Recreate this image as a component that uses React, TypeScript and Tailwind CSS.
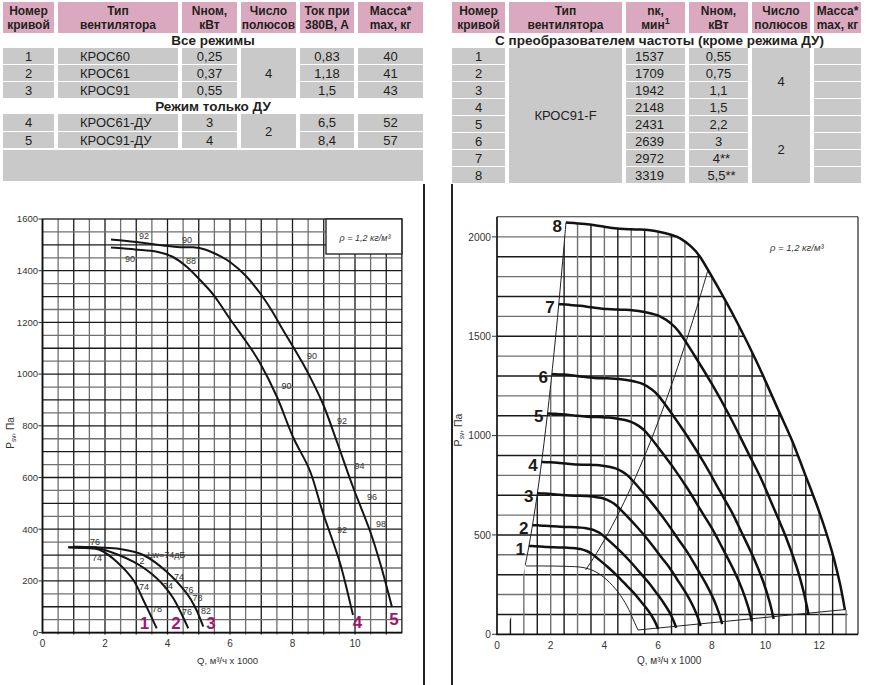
import React from "react";

type P = [number, number];
const f = (n: number) => n.toFixed(2);

function segs(pts: P[]): string {
  let d = "";
  for (let i = 0; i < pts.length - 1; i++) {
    const p0 = pts[i - 1] || pts[i];
    const p1 = pts[i];
    const p2 = pts[i + 1];
    const p3 = pts[i + 2] || p2;
    const c1x = p1[0] + (p2[0] - p0[0]) / 6;
    const c1y = p1[1] + (p2[1] - p0[1]) / 6;
    const c2x = p2[0] - (p3[0] - p1[0]) / 6;
    const c2y = p2[1] - (p3[1] - p1[1]) / 6;
    d += ` C${f(c1x)},${f(c1y)} ${f(c2x)},${f(c2y)} ${f(p2[0])},${f(p2[1])}`;
  }
  return d;
}
const smooth = (pts: P[]) => `M${f(pts[0][0])},${f(pts[0][1])}` + segs(pts);

const SANS = "'Liberation Sans', Arial, sans-serif";
const NARROW = "'Liberation Sans Narrow', 'Liberation Sans', Arial, sans-serif";
const PURPLE = "#9e1a6d";
const DARK = "#1a1a1a";
const GRAY = "#707070";

function LeftChart() {
  const X = (q: number) => 42.5 + q * 31.25;
  const Y = (p: number) => 632.6 - p * 0.2585;
  const right = X(11.5);
  const top = Y(1600);
  const c5: P[] = [
    [111, 239.5], [140, 242.5], [163, 245.5], [180, 247.3], [193, 247.3], [205, 249.5], [218, 255], [230, 262],
    [245, 275], [260, 293], [272, 311], [283, 330], [295, 350], [307, 371], [323, 404], [337, 442],
    [353, 487], [370, 531], [381, 566], [392, 607],
  ];
  const c4: P[] = [
    [111, 247.5], [135, 249.5], [157, 251.8], [173, 257], [187, 267], [200, 280], [212, 293], [220, 304],
    [230, 319], [245, 340], [260, 363], [277, 397], [293, 437], [310, 471], [323, 513], [340, 563], [353, 615],
  ];
  const c1: P[] = [[68.3, 547.3], [85, 548], [100, 550], [116.7, 561.7], [133.3, 580], [143.3, 600], [150, 614], [156.7, 628.3]];
  const c2: P[] = [[68.3, 547.3], [85, 547.6], [100, 548.5], [133.3, 561.7], [156.7, 578.3], [173.3, 598.3], [188.3, 628.3]];
  const c3: P[] = [[73.3, 546.7], [100, 547.5], [120, 549], [143.3, 555], [166.7, 571.7], [186.7, 593.3], [196, 609], [203.3, 626.7]];
  const small: [string, number, number][] = [
    ["92", 144, 239], ["90", 187, 242.5], ["90", 130, 262], ["88", 191, 264],
    ["90", 312, 358.5], ["90", 286.5, 388.5], ["92", 342, 423.5], ["94", 359.5, 468.5],
    ["96", 372, 500], ["98", 381, 526.5], ["92", 342, 532.5],
    ["76", 95, 545], ["74", 97, 561], ["74", 179, 580], ["74", 144, 590], ["74", 168, 588.5],
    ["76", 188.5, 592.5], ["78", 197.5, 601], ["78", 157, 611.5], ["76", 187, 615], ["82", 206, 613.5],
  ];
  return (
    <svg width={423} height={501} viewBox="0 184 423 501" className="block shrink-0">
      <rect x={42.5} y={top} width={right - 42.5} height={632.6 - top} fill="#fff" />
      {Array.from({ length: 22 }, (_, i) => i + 1).map((k) => {
        const x = 42.5 + k * 15.625;
        return <line key={"v" + k} x1={x} x2={x} y1={top} y2={634.5} stroke={k % 2 === 0 ? DARK : GRAY} strokeWidth={1.3} />;
      })}
      {Array.from({ length: 31 }, (_, i) => i + 1).map((k) => {
        const y = 632.6 - k * 12.925;
        return <line key={"h" + k} x1={42.5} x2={right} y1={y} y2={y} stroke={k % 2 === 0 ? DARK : GRAY} strokeWidth={1.3} />;
      })}
      <rect x={42.5} y={top} width={right - 42.5} height={632.6 - top} fill="none" stroke={DARK} strokeWidth={1.3} />
      <line x1={42.5} x2={42.5} y1={top} y2={633.5} stroke="#111" strokeWidth={1.7} />
      <line x1={42} x2={right} y1={632.6} y2={632.6} stroke="#111" strokeWidth={1.7} />
      {[0, 200, 400, 600, 800, 1000, 1200, 1400, 1600].map((p) => (
        <g key={"yl" + p}>
          <line x1={38.5} x2={42.5} y1={Y(p)} y2={Y(p)} stroke="#333" strokeWidth={1} />
          <text x={38} y={Y(p) + 3.3} fontSize={9.5} textAnchor="end" fill="#333" fontFamily={SANS}>{p}</text>
        </g>
      ))}
      {[0, 2, 4, 6, 8, 10].map((q) => (
        <text key={"xl" + q} x={X(q)} y={647} fontSize={10} textAnchor="middle" fill="#333" fontFamily={SANS}>{q}</text>
      ))}
      <text x={197} y={664} fontSize={9.5} fill="#333" fontFamily={SANS}>Q, м³/ч x 1000</text>
      <text transform="translate(13.5,433) rotate(-90)" fontSize={10} textAnchor="middle" fill="#333" fontFamily={SANS}>
        P<tspan fontSize={6.5} dy={2}>sv</tspan><tspan dy={-2}>, Па</tspan>
      </text>
      <rect x={326} y={top} width={right - 326} height={35} fill="#fff" stroke={DARK} strokeWidth={1.3} />
      <text x={365} y={241} fontSize={9} textAnchor="middle" fill="#333" fontStyle="italic" fontFamily={SANS}>ρ = 1,2 кг/м³</text>
      {[c5, c4].map((c, i) => (
        <path key={"big" + i} d={smooth(c)} fill="none" stroke="#151515" strokeWidth={2} />
      ))}
      {[c1, c2, c3].map((c, i) => (
        <path key={"sm" + i} d={smooth(c)} fill="none" stroke="#151515" strokeWidth={2} />
      ))}
      {small.map(([t, x, y], i) => (
        <text key={"s" + i} x={x} y={y} fontSize={9} textAnchor="middle" fill="#333" fontFamily={NARROW}>{t}</text>
      ))}
      <text x={147.5} y={558} fontSize={9} fill="#333" fontFamily={NARROW}>Lw=74дБ</text>
      <text x={142} y={564} fontSize={9} textAnchor="middle" fill="#333" fontFamily={NARROW}>2</text>
      {([["1", 144.5, 629.3], ["2", 176, 629.3], ["3", 211, 629.3], ["4", 357.5, 628.3], ["5", 394, 625]] as [string, number, number][]).map(([t, x, y]) => (
        <text key={"p" + t} x={x} y={y} fontSize={17} fontWeight="bold" textAnchor="middle" fill={PURPLE} fontFamily={NARROW}>{t}</text>
      ))}
    </svg>
  );
}

function RightChart() {
  const X = (q: number) => 497 + q * 26.85;
  const Y = (p: number) => 634.3 - p * 0.1987;
  const base8: P[] = [
    [2.57, 2072], [3.0, 2068], [3.46, 2062], [4.0, 2051], [4.58, 2041], [5.0, 2038], [5.33, 2037], [5.7, 2033], [6.07, 2025],
    [6.45, 2012], [6.82, 1993], [7.2, 1955], [7.56, 1900], [8.18, 1758], [8.93, 1573], [9.67, 1372], [10.45, 1137],
    [10.98, 978], [11.46, 810], [12.02, 609], [12.46, 424], [12.77, 257], [12.96, 122],
  ];
  const speeds = [1537, 1709, 1942, 2148, 2431, 2639, 2972, 3319];
  const curve = (r: number): P[] => base8.map(([q, p]) => [X(q * r), Y(p * r * r)]);
  const c8 = curve(1);
  const para = (k: number, q0: number, q1: number, n: number): P[] =>
    Array.from({ length: n + 1 }, (_, i) => {
      const q = q0 + ((q1 - q0) * i) / n;
      return [X(q), Y(k * q * q)];
    });
  const leftPara = para(314, 1.05, 2.57, 12);
  const clipPara = para(314, 0, 2.57, 20);
  const rightPara = para(29.7, 3.3, 7.86, 16);
  const c0: P[] = [[526, 566], [545, 566], [565, 566.3], [583, 567.5], [596, 572], [607, 580], [618, 592], [627, 606], [633, 619], [638, 630]];
  const vClip =
    `M497,634.3 L` + clipPara.map((p) => `${f(p[0])},${f(p[1])}`).join(" L") + segs(c8) + " L847.5,610 L847.5,634.3 Z";
  const hClip = `M494,636 L494,218 L${f(c8[0][0])},${f(c8[0][1])}` + segs(c8) + " L847.5,610 L847.5,636 Z";
  const right = 858;
  const top = 216.7;
  return (
    <svg width={421} height={501} viewBox="453 184 421 501" className="block shrink-0">
      <defs>
        <clipPath id="vclip"><path d={vClip} /></clipPath>
        <clipPath id="hclip"><path d={hClip} /></clipPath>
      </defs>
      <g clipPath="url(#hclip)">
        {Array.from({ length: 20 }, (_, i) => (i + 1) * 100).map((p) => (
          <line key={"h" + p} x1={497} x2={860} y1={Y(p)} y2={Y(p)} stroke={(p / 100) % 2 === 1 ? DARK : GRAY} strokeWidth={1.4} />
        ))}
      </g>
      <g clipPath="url(#vclip)">
        {Array.from({ length: 26 }, (_, i) => i + 1).map((k) => (
          <line key={"v" + k} x1={X(k * 0.5)} x2={X(k * 0.5)} y1={210} y2={634.3} stroke={k % 2 === 1 ? DARK : GRAY} strokeWidth={1.4} />
        ))}
      </g>
      <line x1={497} x2={right} y1={top} y2={top} stroke="#333" strokeWidth={1.1} />
      <line x1={right} x2={right} y1={top} y2={634.3} stroke="#333" strokeWidth={1.3} />
      <line x1={497} x2={497} y1={top} y2={635} stroke="#111" strokeWidth={1.7} />
      <line x1={496} x2={right} y1={634.3} y2={634.3} stroke="#111" strokeWidth={1.7} />
      {[0, 500, 1000, 1500, 2000].map((p) => (
        <g key={"yl" + p}>
          <line x1={492} x2={497} y1={Y(p)} y2={Y(p)} stroke="#333" strokeWidth={1} />
          <text x={491} y={Y(p) + 3.6} fontSize={10.2} textAnchor="end" fill="#333" fontFamily={SANS}>{p}</text>
        </g>
      ))}
      {[0, 2, 4, 6, 8, 10, 12].map((q) => (
        <text key={"xl" + q} x={X(q)} y={649} fontSize={10.2} textAnchor="middle" fill="#333" fontFamily={SANS}>{q}</text>
      ))}
      <text x={637} y={664} fontSize={10} fill="#333" fontFamily={SANS}>Q, м³/ч x 1000</text>
      <text transform="translate(462,430) rotate(-90)" fontSize={10.5} textAnchor="middle" fill="#333" fontFamily={SANS}>
        P<tspan fontSize={6.5} dy={2}>sv</tspan><tspan dy={-2}>, Па</tspan>
      </text>
      <text x={770} y={251} fontSize={9.5} fill="#333" fontStyle="italic" fontFamily={SANS}>ρ = 1,2 кг/м³</text>
      <path d={smooth(leftPara)} fill="none" stroke="#222" strokeWidth={1} />
      <path d={smooth(rightPara)} fill="none" stroke="#222" strokeWidth={1} />
      <path d={smooth(c0)} fill="none" stroke="#222" strokeWidth={1} />
      <line x1={638} y1={630} x2={845.5} y2={609.5} stroke="#222" strokeWidth={1} />
      {speeds.map((n, i) => {
        const r = n / 3319;
        const pts = curve(r);
        return (
          <g key={"c" + n}>
            <path d={smooth(pts)} fill="none" stroke="#121212" strokeWidth={2.5} />
            <text x={pts[0][0] - 4} y={pts[0][1] + 9} fontSize={17} fontWeight="bold" textAnchor="end" fill="#1a1a1a" fontFamily={NARROW}>
              {i + 1}
            </text>
          </g>
        );
      })}
    </svg>
  );
}

const HDR = "bg-[#dba9bf] flex flex-col items-center justify-center text-center font-bold text-[12px] leading-[14px] font-['Liberation_Sans_Narrow','Liberation_Sans',Arial,sans-serif]";
const CELL = "bg-[#c9c9c9] flex items-center justify-center text-[13px] leading-none";
const TITLE = "col-span-6 flex items-center justify-center font-bold text-[13.5px] leading-none";

function LeftTable() {
  const rows1 = [
    ["1", "КРОС60", "0,25", "0,83", "40"],
    ["2", "КРОС61", "0,37", "1,18", "41"],
    ["3", "КРОС91", "0,55", "1,5", "43"],
  ];
  const rows2 = [
    ["4", "КРОС61-ДУ", "3", "6,5", "52"],
    ["5", "КРОС91-ДУ", "4", "8,4", "57"],
  ];
  const renderRow = (r: string[], i: number, span: React.ReactNode) => (
    <React.Fragment key={r[0]}>
      <div className={CELL}>{r[0]}</div>
      <div className={CELL + " !justify-start pl-[22px]"}>{r[1]}</div>
      <div className={CELL}>{r[2]}</div>
      {i === 0 ? span : null}
      <div className={CELL}>{r[3]}</div>
      <div className={CELL}>{r[4]}</div>
    </React.Fragment>
  );
  return (
    <div className="grid w-[420px] grid-cols-[51px_120px_55px_55px_54px_65px] grid-rows-[31px_13px_16px_16px_16px_14px_17px_16px_32px] gap-x-[4px] gap-y-[1px]">
      <div className={HDR}>Номер<br />кривой</div>
      <div className={HDR}>Тип<br />вентилятора</div>
      <div className={HDR}>Nном,<br />кВт</div>
      <div className={HDR}>Число<br />полюсов</div>
      <div className={HDR}>Ток при<br />380В, А</div>
      <div className={HDR}>Масса*<br />max, кг</div>
      <div className={TITLE}>Все режимы</div>
      {rows1.map((r, i) => renderRow(r, i, <div className={CELL + " row-span-3"}>4</div>))}
      <div className={TITLE + " pt-[2px]"}>Режим только ДУ</div>
      {rows2.map((r, i) => renderRow(r, i, <div className={CELL + " row-span-2"}>2</div>))}
      <div className="col-span-6 bg-[#c9c9c9] mt-[1px]" />
    </div>
  );
}

function RightTable() {
  const rows = [
    ["1", "1537", "0,55"],
    ["2", "1709", "0,75"],
    ["3", "1942", "1,1"],
    ["4", "2148", "1,5"],
    ["5", "2431", "2,2"],
    ["6", "2639", "3"],
    ["7", "2972", "4**"],
    ["8", "3319", "5,5**"],
  ];
  return (
    <div className="grid w-[409px] grid-cols-[53px_113px_59px_59px_58px_47px] grid-rows-[31px_13px_repeat(8,16px)] gap-x-[4px] gap-y-[1px]">
      <div className={HDR}>Номер<br />кривой</div>
      <div className={HDR}>Тип<br />вентилятора</div>
      <div className={HDR}><span>nк,</span><span>мин<sup>1</sup></span></div>
      <div className={HDR}>Nном,<br />кВт</div>
      <div className={HDR}>Число<br />полюсов</div>
      <div className={HDR}>Масса*<br />max, кг</div>
      <div className={TITLE + " whitespace-nowrap pl-[6px]"}>С преобразователем частоты (кроме режима ДУ)</div>
      {rows.map((r, i) => (
        <React.Fragment key={r[0]}>
          <div className={CELL}>{r[0]}</div>
          {i === 0 ? <div className={CELL + " row-span-8"}>КРОС91-F</div> : null}
          <div className={CELL + " !justify-start pl-[9px]"}>{r[1]}</div>
          <div className={CELL + (i >= 6 ? " pl-[6px]" : "")}>{r[2]}</div>
          {i === 0 ? <div className={CELL + " row-span-4"}>4</div> : null}
          {i === 4 ? <div className={CELL + " row-span-4"}>2</div> : null}
          <div className={CELL} />
        </React.Fragment>
      ))}
    </div>
  );
}

export default function App() {
  return (
    <div className="w-[874px] h-[685px] overflow-hidden bg-white text-[#231f20] font-['Liberation_Sans',Arial,sans-serif]">
      <div className="flex h-[184px] pt-[2px] pl-[3px]">
        <LeftTable />
        <div className="w-[29px] shrink-0" />
        <RightTable />
      </div>
      <div className="flex h-[501px]">
        <LeftChart />
        <div className="w-[30px] shrink-0 border-l-2 border-r-2 border-[#222]" />
        <RightChart />
      </div>
    </div>
  );
}
